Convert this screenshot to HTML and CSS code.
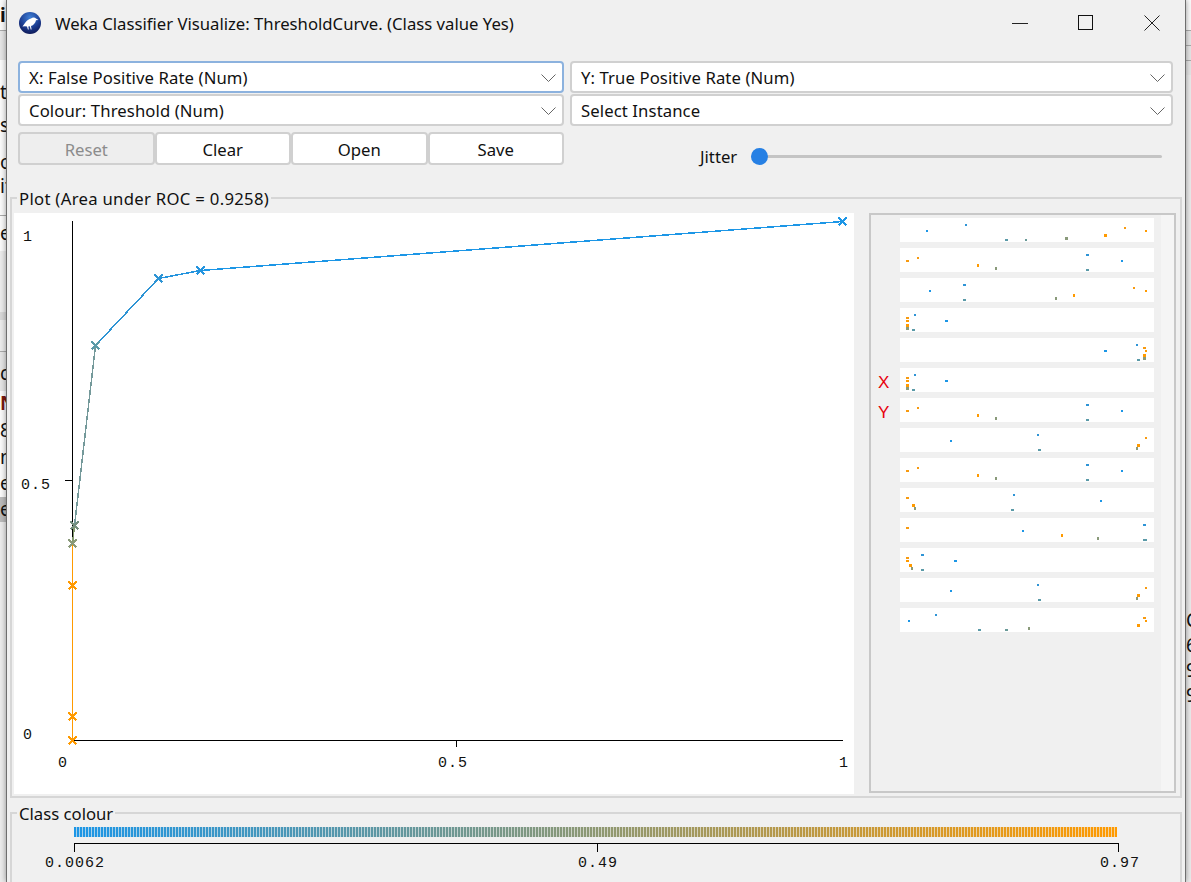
FILE: index.html
```html
<!DOCTYPE html>
<html lang="en">
<head>
    <meta charset="UTF-8">
    <title>Weka Classifier Visualize: ThresholdCurve. (Class value Yes)</title>
    <link rel="stylesheet" href="styles.css">
</head>
<body>

    <div class="back back-left">
        <div class="strip"><b>is</b></div>
        <div class="strip grey rule"></div>
        <div class="strip"></div>
        <div class="strip">t</div>
        <div class="strip">se</div>
        <div class="strip">or</div>
        <div class="strip">it</div>
        <div class="strip"></div>
        <div class="strip rule">e</div>
        <div class="strip soft"></div>
        <div class="strip band"></div>
        <div class="strip soft"></div>
        <div class="strip grey rule low">cl</div>
        <div class="strip"><b class="red">N</b></div>
        <div class="strip">8</div>
        <div class="strip">n</div>
        <div class="strip">e</div>
        <div class="strip picked">e</div>
        <div class="strip soft"></div>
    </div>

    <div class="window">
        <div class="titlebar">
            <svg class="app-icon" viewBox="0 0 22 22">
                <defs>
                    <radialGradient id="orb" cx="50%" cy="25%" r="80%">
                        <stop offset="0" stop-color="#3f7fd6"/>
                        <stop offset="0.55" stop-color="#1d3f94"/>
                        <stop offset="1" stop-color="#0c1450"/>
                    </radialGradient>
                </defs>
                <circle cx="11" cy="11" r="11" fill="url(#orb)"/>
                <path fill="#fff" d="M3.5 14.5C6 11 8 7.5 12 6.5C13.5 5 16 5 17 6.5L19.5 8L17 8.3C16.5 11 14.5 13.3 12 14L12.6 17.5L11.7 17.5L10.8 14.3L9.3 14.4L9.8 17.5L8.9 17.5L8 14.5L6 14.2Z"/>
            </svg>
            <span class="title">Weka Classifier Visualize: ThresholdCurve. (Class value Yes)</span>
            <div class="win-buttons">
                <div class="win-btn"><svg width="16" height="16"><path d="M0 8.5H16" stroke="#222"/></svg></div>
                <div class="win-btn"><svg width="16" height="16"><rect x="0.5" y="0.5" width="14" height="14" fill="none" stroke="#111"/></svg></div>
                <div class="win-btn"><svg width="16" height="16"><path d="M0.5 0.5L15.5 15.5M15.5 0.5L0.5 15.5" stroke="#222"/></svg></div>
            </div>
        </div>

        <div class="controls">
            <div class="combo focused">X: False Positive Rate (Num)<svg class="chevron" viewBox="0 0 15 8"><path d="M0.5 0.5L7.5 7.5L14.5 0.5"/></svg></div>
            <div class="combo">Y: True Positive Rate (Num)<svg class="chevron" viewBox="0 0 15 8"><path d="M0.5 0.5L7.5 7.5L14.5 0.5"/></svg></div>
            <div class="combo">Colour: Threshold (Num)<svg class="chevron" viewBox="0 0 15 8"><path d="M0.5 0.5L7.5 7.5L14.5 0.5"/></svg></div>
            <div class="combo">Select Instance<svg class="chevron" viewBox="0 0 15 8"><path d="M0.5 0.5L7.5 7.5L14.5 0.5"/></svg></div>
            <div class="buttons">
                <div class="btn disabled">Reset</div>
                <div class="btn">Clear</div>
                <div class="btn">Open</div>
                <div class="btn">Save</div>
            </div>
            <div class="jitter">
                <span>Jitter</span>
                <div class="slider"><div class="thumb"></div></div>
            </div>
        </div>

        <fieldset class="group plot-group">
            <legend>Plot (Area under ROC = 0.9258)</legend>
            <div class="plot-body">
                <svg class="plot" viewBox="14 213 840 581">
                    <g class="axis">
                        <path d="M72.5 221V741M72 740.5H843M65 480.5H72M456.5 741V747"/>
                    </g>
                    <text class="num" x="23" y="241">1</text>
                    <text class="num" x="21" y="489">0.5</text>
                    <text class="num" x="23" y="739">0</text>
                    <text class="num" x="58" y="767">0</text>
                    <text class="num" x="438" y="767">0.5</text>
                    <text class="num" x="839" y="767">1</text>

                    <g class="curve">
                        <path stroke="#1c96e6" d="M842 221L200 270"/>
                        <path stroke="#2494de" d="M200 270L158 278"/>
                        <path stroke="#2e94d4" d="M158 278L95 345"/>
                        <path stroke="#74999a" d="M95 345L74 525"/>
                        <path stroke="#84996f" d="M74 525L72 543"/>
                        <path class="thin" stroke="#ff9a00" d="M72 543V740"/>
                    </g>
                    <g class="marks">
                        <path stroke="#1c96e6" d="M838 217l8 8m0 -8l-8 8"/>
                        <path stroke="#2494de" d="M196 266l8 8m0 -8l-8 8"/>
                        <path stroke="#2e94d4" d="M154 274l8 8m0 -8l-8 8"/>
                        <path stroke="#5a9aa8" d="M91 341l8 8m0 -8l-8 8"/>
                        <path stroke="#74907e" d="M70 521l8 8m0 -8l-8 8"/>
                        <path stroke="#8a9a7a" d="M68 539l8 8m0 -8l-8 8"/>
                        <path stroke="#ff9a00" d="M68 581l8 8m0 -8l-8 8"/>
                        <path stroke="#ff9a00" d="M68 712l8 8m0 -8l-8 8"/>
                        <path stroke="#ff9a00" d="M68 736l8 8m0 -8l-8 8"/>
                    </g>
                </svg>

                <div class="matrix">
                    <svg width="0" height="0" class="defs">
                        <symbol id="r2" viewBox="0 0 254 24">
                            <rect class="g" x="6" y="12" width="3" height="2"/><rect class="g" x="17" y="9" width="2" height="2"/>
                            <rect class="f" x="77" y="16" width="2" height="3"/><rect class="e" x="95" y="19" width="2" height="3"/>
                            <rect class="b" x="186" y="6" width="3" height="2"/><rect class="a" x="221" y="12" width="2" height="2"/>
                            <rect class="c" x="186" y="21" width="3" height="2"/>
                        </symbol>
                        <symbol id="r4" viewBox="0 0 254 24">
                            <rect class="g" x="6" y="9" width="3" height="2"/><rect class="f" x="6" y="12" width="3" height="2"/>
                            <rect class="f" x="6" y="16" width="3" height="3"/><rect class="e" x="6" y="19" width="3" height="3"/>
                            <rect class="b" x="14" y="6" width="2" height="2"/><rect class="c" x="12" y="21" width="3" height="2"/>
                            <rect class="a" x="45" y="12" width="3" height="2"/>
                        </symbol>
                        <symbol id="r8" viewBox="0 0 254 24">
                            <rect class="a" x="50" y="12" width="2" height="2"/><rect class="b" x="137" y="6" width="2" height="2"/>
                            <rect class="g" x="245" y="9" width="2" height="2"/><rect class="f" x="237" y="16" width="3" height="3"/>
                            <rect class="e" x="236" y="19" width="2" height="3"/><rect class="c" x="138" y="21" width="3" height="2"/>
                        </symbol>
                    </svg>

                    <div class="m-row"><span class="m-axis"></span><svg class="m-cell" viewBox="0 0 254 24">
                        <rect class="a" x="26" y="12" width="2" height="2"/><rect class="b" x="65" y="6" width="2" height="2"/>
                        <rect class="c" x="105" y="21" width="3" height="2"/><rect class="d" x="125" y="21" width="2" height="2"/>
                        <rect class="e" x="165" y="19" width="3" height="3"/><rect class="f" x="204" y="16" width="3" height="3"/>
                        <rect class="g" x="224" y="9" width="2" height="2"/><rect class="f" x="245" y="12" width="2" height="2"/>
                    </svg></div>
                    <div class="m-row"><span class="m-axis"></span><svg class="m-cell"><use href="#r2"/></svg></div>
                    <div class="m-row"><span class="m-axis"></span><svg class="m-cell" viewBox="0 0 254 24">
                        <rect class="a" x="29" y="12" width="2" height="2"/><rect class="b" x="63" y="6" width="3" height="2"/>
                        <rect class="c" x="63" y="21" width="3" height="2"/><rect class="e" x="155" y="19" width="2" height="3"/>
                        <rect class="f" x="173" y="16" width="2" height="3"/><rect class="g" x="233" y="9" width="2" height="2"/>
                        <rect class="f" x="245" y="12" width="2" height="2"/>
                    </svg></div>
                    <div class="m-row"><span class="m-axis"></span><svg class="m-cell"><use href="#r4"/></svg></div>
                    <div class="m-row"><span class="m-axis"></span><svg class="m-cell" viewBox="0 0 254 24">
                        <rect class="a" x="204" y="12" width="3" height="2"/><rect class="b" x="236" y="6" width="2" height="2"/>
                        <rect class="g" x="243" y="9" width="3" height="2"/><rect class="f" x="245" y="12" width="2" height="2"/>
                        <rect class="f" x="243" y="16" width="3" height="3"/><rect class="e" x="243" y="19" width="3" height="3"/>
                        <rect class="c" x="237" y="21" width="3" height="2"/>
                    </svg></div>
                    <div class="m-row"><span class="m-axis">X</span><svg class="m-cell"><use href="#r4"/></svg></div>
                    <div class="m-row"><span class="m-axis">Y</span><svg class="m-cell"><use href="#r2"/></svg></div>
                    <div class="m-row"><span class="m-axis"></span><svg class="m-cell"><use href="#r8"/></svg></div>
                    <div class="m-row"><span class="m-axis"></span><svg class="m-cell"><use href="#r2"/></svg></div>
                    <div class="m-row"><span class="m-axis"></span><svg class="m-cell" viewBox="0 0 254 24">
                        <rect class="g" x="6" y="9" width="3" height="2"/><rect class="f" x="12" y="16" width="3" height="3"/>
                        <rect class="e" x="14" y="19" width="2" height="3"/><rect class="b" x="113" y="6" width="2" height="2"/>
                        <rect class="a" x="200" y="12" width="2" height="2"/><rect class="c" x="111" y="21" width="3" height="2"/>
                    </svg></div>
                    <div class="m-row"><span class="m-axis"></span><svg class="m-cell" viewBox="0 0 254 24">
                        <rect class="g" x="6" y="9" width="3" height="2"/><rect class="a" x="122" y="12" width="2" height="2"/>
                        <rect class="f" x="161" y="16" width="2" height="3"/><rect class="e" x="197" y="19" width="2" height="3"/>
                        <rect class="b" x="243" y="6" width="3" height="2"/><rect class="c" x="243" y="21" width="4" height="2"/>
                    </svg></div>
                    <div class="m-row"><span class="m-axis"></span><svg class="m-cell" viewBox="0 0 254 24">
                        <rect class="b" x="21" y="6" width="3" height="2"/><rect class="a" x="54" y="12" width="3" height="2"/>
                        <rect class="g" x="6" y="9" width="3" height="2"/><rect class="f" x="6" y="12" width="3" height="2"/>
                        <rect class="f" x="9" y="16" width="3" height="3"/><rect class="e" x="11" y="19" width="2" height="3"/>
                        <rect class="c" x="21" y="21" width="3" height="2"/>
                    </svg></div>
                    <div class="m-row"><span class="m-axis"></span><svg class="m-cell"><use href="#r8"/></svg></div>
                    <div class="m-row"><span class="m-axis"></span><svg class="m-cell" viewBox="0 0 254 24">
                        <rect class="a" x="8" y="12" width="2" height="2"/><rect class="b" x="35" y="6" width="2" height="2"/>
                        <rect class="g" x="243" y="9" width="3" height="2"/><rect class="f" x="245" y="12" width="2" height="2"/>
                        <rect class="f" x="237" y="16" width="3" height="3"/><rect class="c" x="78" y="21" width="3" height="2"/>
                        <rect class="d" x="105" y="21" width="3" height="2"/><rect class="e" x="128" y="19" width="2" height="3"/>
                    </svg></div>
                </div>
            </div>
        </fieldset>

        <fieldset class="group colour-group">
            <legend>Class colour</legend>
            <div class="colour-bar"></div>
            <div class="scale"><span class="scale-mid"></span></div>
            <div class="scale-labels">
                <span>0.0062</span>
                <span>0.49</span>
                <span>0.97</span>
            </div>
        </fieldset>
    </div>

    <div class="back back-right">
        <div class="strip"></div>
        <div class="strip grey rule"></div>
        <div class="strip grey rule"></div>
        <div class="strip grey rule"></div>
        <div class="strip soft"></div>
        <div class="strip soft">C</div>
        <div class="strip soft">6</div>
        <div class="strip soft">9</div>
        <div class="strip soft">9</div>
        <div class="strip soft"></div>
    </div>

</body>
</html>
```

FILE: styles.css
```css
* { box-sizing: border-box; }
html, body { margin: 0; height: 100%; }
body { display: flex; width: 1191px; height: 882px; overflow: hidden; background: #f0f0f0; color: #111; font-family: "Noto Sans", sans-serif; font-size: 16.7px; }

/* bits of the windows behind */
.back { display: grid; overflow: hidden; height: 882px; }
.back-left { width: 6px; grid-template-rows: 30px 30px 20px 24px 42px 32px 16px 21px 36px 61px 8px 31px 40px 25px 28px 26px 27px 25px 1fr; }
.back-right { width: 5px; grid-template-rows: 30px 15px 15px 15px 533px 25px 25px 25px 25px 1fr; }
.strip { min-height: 0; background: #fbfbfb; font-size: 19px; line-height: 1; display: flex; align-items: center; white-space: nowrap; overflow: hidden; }
.strip.grey { background: #e6e6e6; }
.strip.soft { background: #ececec; }
.strip.band { background: #d8d8d8; }
.strip.picked { background: #bcbcbc; }
.strip.rule { border-top: 1px solid #aaa; }
.strip.low { padding-top: 4px; }
.red { color: #7a1a10; }

.window { position: relative; z-index: 1; width: 1180px; height: 882px; flex: none; background: #f0f0f0; border-left: 1px solid #6e6e6e; border-right: 1px solid #6e6e6e; box-shadow: 0 0 6px rgba(0,0,0,.4); }

.titlebar { display: flex; align-items: center; height: 46px; margin-bottom: 15px; padding-left: 12px; }
.app-icon { width: 22px; height: 22px; flex: none; }
.title { margin-left: 14px; white-space: nowrap; }
.win-buttons { display: flex; margin-left: auto; }
.win-btn { width: 66px; height: 46px; display: flex; align-items: center; justify-content: center; }

.controls { display: grid; grid-template-columns: 546px 603px; column-gap: 6px; row-gap: 1px; margin-left: 11px; }
.combo { position: relative; height: 32px; padding-left: 9px; line-height: 29px; background: #fff; border: 2px solid #d0d0d0; border-radius: 4px; white-space: nowrap; letter-spacing: 0.1px; }
.combo.focused { border-color: #8cb2de; }
.chevron { position: absolute; right: 6px; top: 11px; width: 15px; height: 8px; fill: none; stroke: #666; }

.buttons { display: flex; margin-top: 5px; }
.btn { flex: 1; height: 33px; line-height: 31px; text-align: center; background: #fff; border: 2px solid #d0d0d0; border-radius: 4px; }
.btn.disabled { background: #eee; color: #8c8c8c; }

.jitter { display: flex; align-items: center; margin-top: 5px; padding: 16px 0 0 130px; height: 33px; }
.slider { position: relative; width: 411px; height: 3px; margin-left: 14px; background: #c4c4c4; border-radius: 2px; }
.thumb { position: absolute; left: 0; top: -7px; width: 17px; height: 17px; border-radius: 50%; background: #2680e4; }

.group { margin: 0; min-width: 0; border: 2px solid #d6d6d6; }
.group legend { margin-left: 3px; padding: 2px 2px 0; line-height: 20px; }
.plot-group { width: 1172px; height: 611px; margin: 22px 0 0 3px; padding: 4px 4px 0 2px; }
.plot-group legend { letter-spacing: 0.3px; }
.plot-body { display: flex; gap: 15px; }
.plot { display: block; width: 840px; height: 581px; flex: none; background: #fff; }
.axis path { fill: none; stroke: #000; shape-rendering: crispEdges; }
.num { font-family: "Liberation Mono", monospace; font-size: 15px; letter-spacing: 1px; fill: #111; }
.curve, .marks { transform: translate(0.5px, 0.5px); }
.curve path, .marks path { fill: none; stroke-width: 1.5; shape-rendering: crispEdges; }
.curve path.thin { stroke-width: 1; }

.matrix { width: 307px; height: 580px; display: flex; flex-direction: column; gap: 6px; padding: 3px 0 0 0; border: 2px solid #c8c8c8; background: linear-gradient(90deg, #f0f0f0 290px, #f5f5f5 290px); }
.defs { position: absolute; }
.m-row { display: flex; height: 24px; flex: none; }
.m-axis { width: 29px; flex: none; padding-left: 7px; color: #e8000b; font-family: "Liberation Sans", sans-serif; font-size: 17px; line-height: 29px; }
.m-cell { display: block; width: 254px; height: 24px; background: #fff; }
.a { fill: #1c96e6; }
.b { fill: #2e94d6; }
.c { fill: #5a9aa8; }
.d { fill: #6a9a98; }
.e { fill: #8a9a7a; }
.f { fill: #ff9a00; }
.g { fill: #f79a10; }

.colour-group { width: 1172px; height: 91px; margin: 4px 0 0 3px; padding: 3px 0 0 2px; }
.colour-bar { width: 1043px; height: 10px; margin-left: 60px; background:
    repeating-linear-gradient(90deg, transparent 0 2px, rgba(240,240,240,.65) 2px 3px),
    linear-gradient(90deg, #1c96e6, #ff9a00); }
.scale { position: relative; width: 1045px; height: 9px; margin: 6px 0 0 60px; border: 1px solid #000; border-bottom: 0; }
.scale-mid { position: absolute; left: 522px; top: 0; height: 8px; border-left: 1px solid #000; }
.scale-labels { display: grid; grid-template-columns: 533px 522px auto; margin: 4px 0 0 31px; font-family: "Liberation Mono", monospace; font-size: 15px; letter-spacing: 1px; line-height: 16px; }
```
